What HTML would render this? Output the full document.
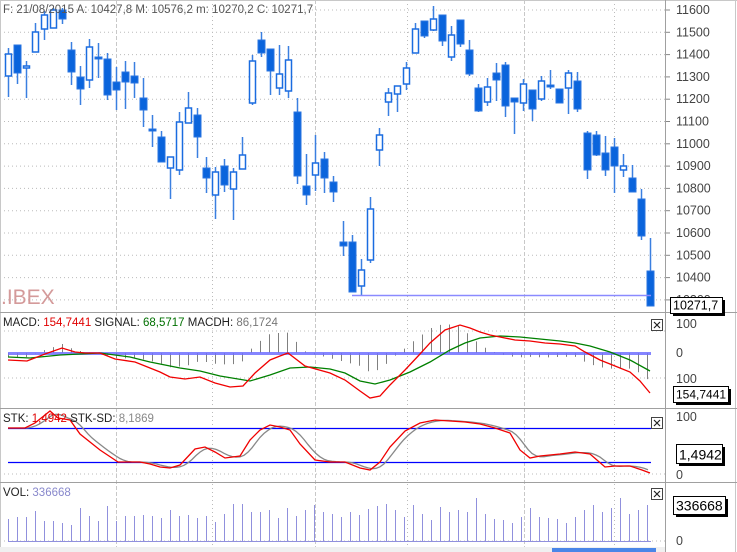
<!DOCTYPE html>
<html><head><meta charset="utf-8"><style>
html,body{margin:0;padding:0;background:#fff;width:737px;height:552px;overflow:hidden}
svg{display:block;font-family:"Liberation Sans",sans-serif}
</style></head><body>
<svg id="s" width="737" height="552" xmlns="http://www.w3.org/2000/svg">
<rect width="737" height="552" fill="#fff"/>
<g id="grid"></g>
<g id="main"></g>
<g id="ind"></g>
<line x1="0" y1="0.5" x2="737" y2="0.5" stroke="#c8c8c8"/>
<line x1="0.5" y1="0" x2="0.5" y2="552" stroke="#c8c8c8"/>
<line x1="665.5" y1="0" x2="665.5" y2="552" stroke="#a0a0a0"/>
<line x1="735.5" y1="0" x2="735.5" y2="552" stroke="#c8c8c8"/>
<line x1="0" y1="312.5" x2="737" y2="312.5" stroke="#a0a0a0"/>
<line x1="0" y1="408.5" x2="737" y2="408.5" stroke="#a0a0a0"/>
<line x1="0" y1="482.5" x2="737" y2="482.5" stroke="#a0a0a0"/>
<rect x="0" y="547" width="665" height="5" fill="#f0f0f0"/>
<rect x="552" y="548" width="104" height="4" fill="#4a86e8"/>
<text x="3" y="13" font-size="11.5" fill="#555">F: 21/08/2015 A: 10427,8 M: 10576,2 m: 10270,2 C: 10271,7</text>
<text x="1" y="304" font-size="21" fill="#d49a9a">.IBEX</text>
<text x="3" y="326" font-size="11.5" fill="#222">MACD: <tspan fill="#e00000">154,7441</tspan> SIGNAL: <tspan fill="#007000">68,5717</tspan> MACDH: <tspan fill="#777">86,1724</tspan></text>
<text x="3" y="422" font-size="11.5" fill="#222">STK: <tspan fill="#e00000">1,4942</tspan> STK-SD: <tspan fill="#888">8,1869</tspan></text>
<text x="3" y="496" font-size="11.5" fill="#222">VOL: <tspan fill="#8888cc">336668</tspan></text>
<g id="axis" font-size="12.5" fill="#444"></g>
<g id="boxes"></g>
</svg>
<script>
var NS="http://www.w3.org/2000/svg";
function el(p,t,a,txt){var e=document.createElementNS(NS,t);for(var k in a)e.setAttribute(k,a[k]);if(txt!=null)e.textContent=txt;document.getElementById(p).appendChild(e);return e;}
for(var k=0;k<14;k++){var y=10+22.3*k;el('grid','line',{x1:0,x2:665,y1:y,y2:y,stroke:'#bbb','stroke-dasharray':'1 3'});}
[331,378].forEach(function(y){el('grid','line',{x1:0,x2:665,y1:y,y2:y,stroke:'#bbb','stroke-dasharray':'1 3'});});
el('grid','line',{x1:0,x2:665,y1:474,y2:474,stroke:'#bbb','stroke-dasharray':'1 3'});
el('grid','line',{x1:0,x2:665,y1:541,y2:541,stroke:'#bbb','stroke-dasharray':'1 3'});
[[116,1],[212,0],[315,1],[407,0],[524,1],[614,0]].forEach(function(v){
 el('grid','line',{x1:v[0]+.5,x2:v[0]+.5,y1:0,y2:552,stroke:v[1]?'#c8c8c8':'#bbb','stroke-dasharray':v[1]?'4 2':'1 3'});});
for(var k=0;k<14;k++){el('axis','text',{x:676,y:14+22.3*k},String(11600-100*k));el('axis','line',{x1:666,x2:670,y1:10+22.3*k,y2:10+22.3*k,stroke:'#888'});}
[[328,'100'],[357,'0'],[383,'100'],[421,'100'],[479,'0'],[545,'0']].forEach(function(a){el('axis','text',{x:676,y:a[0]},a[1]);});
var C=[[8,48,97,54,76,0],[17,45,84,45,73,1],[26,61,98,66,68,0],[35,23,52,32,52,0],[44,11,40,15,29,0],[53,8,28,10,28,0],[62,8,24,10,19,1],
[71,42,85,50,72,1],[80,66,105,77,89,1],[89,39,88,47,80,0],[98,43,78,57,59,1],[107,53,100,59,95,1],[116,67,110,82,90,1],[125,61,109,72,82,1],[134,62,98,76,83,1],
[143,78,127,98,110,1],[152,115,147,129,131,1],[161,131,162,137,162,1],[170,157,199,157,168,0],[179,112,175,122,170,0],[188,92,123,108,123,0],[197,108,158,115,137,1],
[206,157,193,168,178,1],[215,167,219,172,195,0],[224,159,192,166,185,1],[233,168,220,172,189,0],[242,137,169,155,169,0],[252,55,105,61,103,0],[261,32,57,40,53,1],
[270,49,95,49,71,1],[279,45,95,74,88,0],[288,46,98,60,91,0],[297,98,184,112,176,1],[306,154,205,186,195,1],[315,135,191,163,175,0],[324,152,193,159,178,1],[333,176,202,182,192,1],
[343,221,256,242,246,1],[352,235,292,242,292,1],[361,259,296,270,286,0],[370,197,263,209,260,0],[379,128,166,135,150,0],[388,88,116,93,102,0],[397,86,112,86,94,0],
[406,62,90,68,84,0],[415,23,53,29,53,0],[424,21,38,21,36,1],[433,6,31,19,30,0],[442,15,46,15,41,1],[451,26,61,35,57,0],[460,20,47,20,44,1],[469,40,76,50,74,1],
[478,84,112,88,111,1],[487,78,106,87,102,0],[496,63,101,73,80,1],[505,62,117,65,106,1],[514,98,134,98,102,1],[523,79,111,84,103,0],[532,90,121,90,109,1],[541,76,101,81,99,0],
[550,70,89,85,87,1],[559,89,103,89,103,1],[568,70,114,73,88,0],[577,72,112,81,109,1],[587,131,179,133,170,1],[596,131,156,135,155,1],[605,136,176,153,170,1],[614,138,193,147,166,1],
[623,154,177,166,170,0],[632,165,192,178,192,1],[641,189,240,199,236,1],[650,238,306,271,306,1]];
C.forEach(function(c){
 el('main','line',{x1:c[0]+.5,x2:c[0]+.5,y1:c[1],y2:c[2],stroke:'#3a7fe0','stroke-width':1.5});
 var h=Math.max(1.5,c[4]-c[3]);
 if(c[5])el('main','rect',{x:c[0]-3,y:c[3],width:7,height:h,fill:'#0a64dc',stroke:'#2a74e0','stroke-width':1});
 else el('main','rect',{x:c[0]-2.5,y:c[3],width:6,height:h,fill:'#fff',stroke:'#1a6ce0','stroke-width':1.5});
});
el('main','line',{x1:352,x2:651,y1:295.5,y2:295.5,stroke:'#8a8aff','stroke-width':1.5});
function interp(P,x){for(var i=0;i<P.length-1;i++){if(x>=P[i][0]&&x<=P[i+1][0]){var t=(x-P[i][0])/(P[i+1][0]-P[i][0]);return P[i][1]+t*(P[i+1][1]-P[i][1]);}}return x<P[0][0]?P[0][1]:P[P.length-1][1];}
function pl(P){return P.map(function(p){return p[0]+','+p[1]}).join(' ');}
var R=[[8,360],[27,361],[45,354],[62,348],[75,352],[85,353],[100,353],[115,359],[135,362],[160,372],[170,377],[185,379],[200,377],[215,383],[230,387],[243,386],[255,373],[270,360],[280,356],[288,353],[305,366],[330,373],[345,380],[360,391],[370,398],[380,396],[390,385],[405,370],[420,354],[430,343],[445,330],[460,325],[470,328],[480,332],[490,335],[500,337],[515,340],[530,341],[545,343],[560,344],[575,346],[585,352],[600,360],[615,366],[630,372],[640,381],[650,393]];
var G=[[8,357],[30,358],[60,355],[100,353],[130,357],[150,362],[180,368],[200,371],[220,376],[250,381],[270,375],[290,368],[310,367],[330,369],[345,373],[360,381],[375,384],[390,380],[410,372],[430,362],[450,350],[465,343],[480,338],[500,336],[520,337],[540,339],[560,341],[575,343],[590,346],[610,352],[630,360],[650,371]];
for(var x=8;x<=651;x+=9){var d=(interp(R,x)-interp(G,x))*1.3;el('ind','line',{x1:x+.5,x2:x+.5,y1:353,y2:353+d,stroke:'#808080'});}
el('ind','line',{x1:8,x2:651,y1:353.5,y2:353.5,stroke:'#7070ff','stroke-width':3,opacity:.85});
el('ind','polyline',{points:pl(G),fill:'none',stroke:'#008000','stroke-width':1.3});
el('ind','polyline',{points:pl(R),fill:'none',stroke:'#f00000','stroke-width':1.3});
var S=[[8,428],[25,428],[35,423],[50,411],[58,418],[70,420],[80,434],[100,450],[118,462],[125,462],[140,462],[150,464],[160,467],[170,468],[180,465],[195,449],[205,447],[215,452],[225,458],[240,456],[250,440],[260,430],[270,425],[280,427],[290,430],[300,444],[315,460],[330,462],[345,462],[360,468],[370,470],[380,462],[390,447],[405,431],[420,423],[435,420],[450,421],[465,422],[480,424],[495,428],[510,433],[520,450],[530,458],[540,456],[560,454],[575,452],[590,454],[605,467],[615,466],[630,466],[642,470],[650,473]];
var SD=[];for(var x=8;x<=650;x+=4){var a=0,n=0;for(var j=-14;j<=0;j+=2){a+=interp(S,Math.max(8,x+j));n++;}SD.push([x,(a/n).toFixed(1)]);}
el('ind','line',{x1:8,x2:651,y1:428.5,y2:428.5,stroke:'#0000ff','stroke-width':1.3});
el('ind','line',{x1:8,x2:651,y1:462.5,y2:462.5,stroke:'#0000ff','stroke-width':1.3});
el('ind','polyline',{points:pl(SD),fill:'none',stroke:'#888','stroke-width':1.3});
el('ind','polyline',{points:pl(S),fill:'none',stroke:'#f00000','stroke-width':1.3});
var V=[519,517,517,511,521,521,523,525,508,516,521,506,521,516,516,515,516,518,510,516,515,518,516,522,514,504,504,512,512,510,518,508,516,510,505,512,514,517,512,515,509,506,504,510,517,505,514,520,507,512,510,512,498,514,519,520,523,517,508,517,518,519,523,517,510,505,512,508,498,514,510,505];
var i=0;for(var x=8;x<=651;x+=9){var t=V[i%V.length];i++;el('ind','line',{x1:x+.5,x2:x+.5,y1:t,y2:541,stroke:'#9090dd'});}
el('ind','line',{x1:8,x2:651,y1:541.5,y2:541.5,stroke:'#9090dd'});
function box(x,y,w,h,t,fs){el('boxes','rect',{x:x+3,y:y+3,width:w,height:h,fill:'#000'});el('boxes','rect',{x:x+.5,y:y+.5,width:w,height:h,fill:'#fff',stroke:'#000'});el('boxes','text',{x:x+3,y:y+h-3.5,'font-size':fs,fill:'#000'},t);}
box(670,297,52,16,'10271,7',12.5);
box(673,386,55,16,'154,7441',12);
box(676,444,46,19,'1,4942',14);
box(673,496,52,18,'336668',14);
[[651,319],[651,417],[651,488]].forEach(function(p){el('boxes','rect',{x:p[0]+.5,y:p[1]+.5,width:11,height:11,fill:'#fff',stroke:'#444'});el('boxes','path',{d:'M'+(p[0]+3)+' '+(p[1]+3)+'l6 6M'+(p[0]+9)+' '+(p[1]+3)+'l-6 6',stroke:'#222','stroke-width':1.2});});
</script>
</body></html>
